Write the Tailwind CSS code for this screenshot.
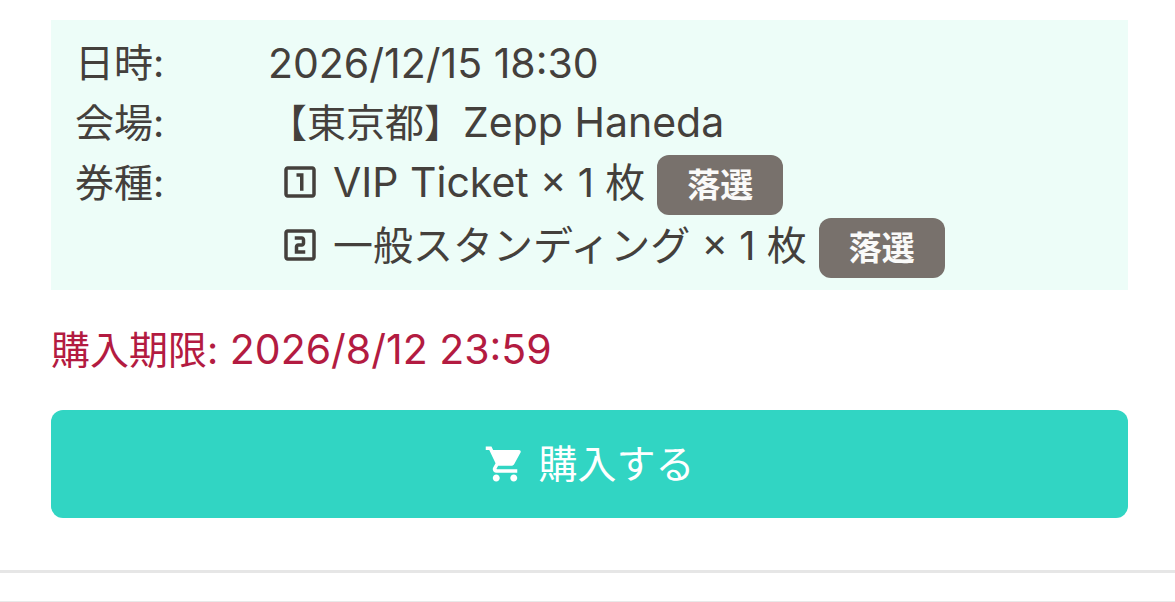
<!DOCTYPE html>
<html lang="ja">
<head>
    <meta charset="UTF-8">
    <meta name="viewport" content="width=device-width, initial-scale=1.0">
    <title>チケット申込内容</title>
    <script src="https://cdn.jsdelivr.net/npm/@tailwindcss/browser@4"></script>
</head>
<body class="bg-white text-[#44403c] font-['Inter','Noto_Sans_CJK_JP',sans-serif] text-[39px] leading-[60px]">
    <main class="pt-5 pr-[47px] pb-[52px] pl-[51px]">
        <!-- Event details -->
        <dl class="grid grid-cols-[193px_1fr] bg-[#edfdf8] px-6 pt-[13px] pb-[11px]">
            <dt>日時:</dt>
            <dd class="text-[41px]">2026/12/15 18:30</dd>
            <dt>会場:</dt>
            <dd>【東京都】<span class="text-[41px] leading-none">Zepp Haneda</span></dd>
            <dt>券種:</dt>
            <dd>
                <ul class="pl-[11px] text-[40px]">
                    <li class="flex items-start pb-px">
                        <svg class="w-[42px] h-[42px] mt-2 mr-3 shrink-0" viewBox="0 0 24 24" fill="currentColor" aria-hidden="true">
                            <path d="M19 3H5c-1.1 0-2 .9-2 2v14c0 1.1.9 2 2 2h14c1.1 0 2-.9 2-2V5c0-1.1-.9-2-2-2zm0 16H5V5h14v14zM12 17h2V7h-4v2h2z"/>
                        </svg>
                        <span><span class="text-[41px] leading-none">VIP Ticket</span> × 1 枚</span>
                        <span class="mt-[2px] ml-3 rounded-xl bg-[#78716c] px-[30px] text-[33px] font-bold text-[#fafaf9]">落選</span>
                    </li>
                    <li class="flex items-start pb-px">
                        <svg class="w-[42px] h-[42px] mt-2 mr-3 shrink-0" viewBox="0 0 24 24" fill="currentColor" aria-hidden="true">
                            <path d="M19 3H5c-1.1 0-2 .9-2 2v14c0 1.1.9 2 2 2h14c1.1 0 2-.9 2-2V5c0-1.1-.9-2-2-2zm0 16H5V5h14v14zM15 15h-4v-2h2c1.1 0 2-.89 2-2V9c0-1.11-.9-2-2-2H9v2h4v2h-2c-1.1 0-2 .89-2 2v4h6v-2z"/>
                        </svg>
                        <span>一般スタンディング × 1 枚</span>
                        <span class="mt-[2px] ml-3 rounded-xl bg-[#78716c] px-[30px] text-[33px] font-bold text-[#fafaf9]">落選</span>
                    </li>
                </ul>
            </dd>
        </dl>

        <p class="mt-[30px] text-[#b31b41]">購入期限:<span class="text-[41px] leading-none"> 2026/8/12 23:59</span></p>

        <button type="button" class="mt-[30px] flex h-[108px] w-full items-center justify-center gap-3 rounded-xl bg-[#31d5c3] text-white">
            <svg class="w-[42px] h-[42px]" viewBox="0 0 24 24" fill="currentColor" aria-hidden="true">
                <path d="M7 18c-1.1 0-1.99.9-1.99 2S5.9 22 7 22s2-.9 2-2-.9-2-2-2zM1 2v2h2l3.6 7.59-1.35 2.45c-.16.28-.25.61-.25.96 0 1.1.9 2 2 2h12v-2H7.42c-.14 0-.25-.11-.25-.25l.03-.12.9-1.63h7.45c.75 0 1.41-.41 1.75-1.03l3.58-6.49c.08-.14.12-.31.12-.48 0-.55-.45-1-1-1H5.21l-.94-2H1zm16 16c-1.1 0-1.99.9-1.99 2s.89 2 1.99 2 2-.9 2-2-.9-2-2-2z"/>
            </svg>
            購入する
        </button>
    </main>

    <footer class="border-t-[3px] border-[#e6e6e6] pt-7">
        <hr class="border-[#e9e9e9]">
    </footer>
</body>
</html>
